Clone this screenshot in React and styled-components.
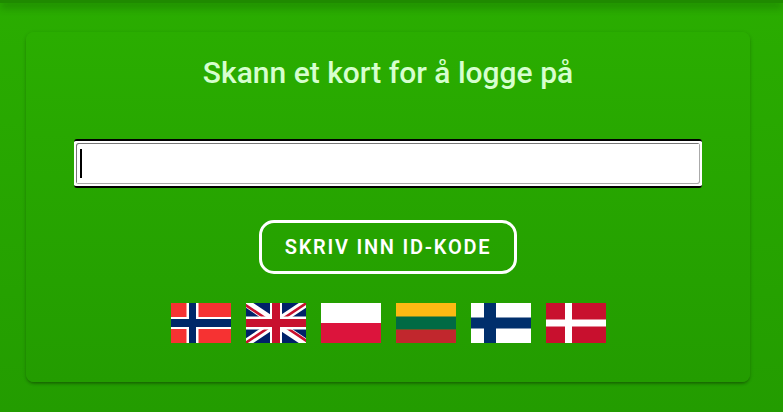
import React from "react";
import styled, { createGlobalStyle } from "styled-components";

const flags = [
	{ code: "no", label: "Norsk" },
	{ code: "gb", label: "English" },
	{ code: "pl", label: "Polski" },
	{ code: "lt", label: "Lietuvių" },
	{ code: "fi", label: "Suomi" },
	{ code: "dk", label: "Dansk" },
];

const GlobalStyle = createGlobalStyle`
	html, body {
		margin: 0;
		height: 100%;
		overflow: hidden;
	}
	body {
		font-family: Roboto, "Liberation Sans", sans-serif;
		background: linear-gradient(#2aad00, #239c00);
	}
`;

const Page = styled.main`
	box-sizing: border-box;
	width: 783px;
	height: 412px;
	padding: 32px 33px 30px 26px;
	position: relative;
`;

const TopShadow = styled.div`
	position: absolute;
	top: 0;
	left: 0;
	right: 0;
	height: 3px;
	background: #1f8a00;
	box-shadow: 0 3px 8px rgba(0, 50, 0, 0.65);
`;

const Card = styled.section`
	box-sizing: border-box;
	height: 350px;
	padding: 24px 48px 0;
	display: flex;
	flex-direction: column;
	align-items: center;
	border-radius: 8px;
	background: linear-gradient(#2aad00, #239c00);
	box-shadow: 0 3px 3px -2px rgba(0, 0, 0, 0.2), 0 2px 3px 0 rgba(0, 0, 0, 0.14),
		0 1px 4px 0 rgba(0, 0, 0, 0.12);
`;

const Title = styled.h1`
	margin: 0;
	font-size: 30px;
	line-height: 33px;
	font-weight: 500;
	color: #d6ffce;
`;

const InputFrame = styled.div`
	position: relative;
	box-sizing: border-box;
	width: 100%;
	height: 49px;
	margin-top: 50px;
	border-top: 2px solid #000;
	border-bottom: 2px solid #000;
	border-radius: 3px;
	background: #fff;
`;

const CodeInput = styled.input`
	display: block;
	box-sizing: border-box;
	width: 100%;
	height: 100%;
	padding: 0 4px;
	border: 2px solid #fff;
	border-radius: 4px;
	outline: none;
	background: #fff;
	box-shadow: inset 1px 1px 0 #777, inset -1px -1px 0 #aaa;
`;

const Caret = styled.span`
	position: absolute;
	left: 6px;
	top: 8px;
	width: 1.5px;
	height: 29px;
	background: #000;
`;

const EnterButton = styled.button`
	box-sizing: border-box;
	width: 258px;
	height: 54px;
	margin-top: 32px;
	border: 3px solid #fff;
	border-radius: 15px;
	background: transparent;
	color: #fff;
	font-family: inherit;
	font-size: 20px;
	font-weight: 600;
	letter-spacing: 1.75px;
	text-transform: uppercase;
`;

const FlagRow = styled.div`
	display: flex;
	gap: 15px;
	margin-top: 29px;
`;

const FlagButton = styled.button`
	display: block;
	width: 60px;
	height: 40px;
	padding: 0;
	border: 0;
	background: none;

	svg {
		display: block;
		width: 60px;
		height: 40px;
	}
`;

function Flag({ code }) {
	if (code === "no")
		return (
			<svg viewBox="0 0 60 40" preserveAspectRatio="none">
				<rect width="60" height="40" fill="#f63232" />
				<rect x="15.5" width="12" height="40" fill="#fff" />
				<rect y="14" width="60" height="12" fill="#fff" />
				<rect x="18" width="7" height="40" fill="#002868" />
				<rect y="16" width="60" height="8" fill="#002868" />
			</svg>
		);
	if (code === "gb")
		return (
			<svg viewBox="0 0 60 40" preserveAspectRatio="none">
				<rect width="60" height="40" fill="#012169" />
				<path d="M0 0L60 40M60 0L0 40" stroke="#fff" strokeWidth="8" />
				<path
					d="M-2 1L28 21M62 -1L32 19M62 39L32 19M-2 41L28 21"
					stroke="#c8102e"
					strokeWidth="2.6"
				/>
				<rect x="24" width="12" height="40" fill="#fff" />
				<rect y="13.5" width="60" height="13" fill="#fff" />
				<rect x="26" width="8" height="40" fill="#c8102e" />
				<rect y="16" width="60" height="8" fill="#c8102e" />
			</svg>
		);
	if (code === "pl")
		return (
			<svg viewBox="0 0 60 40" preserveAspectRatio="none">
				<rect width="60" height="20" fill="#fff" />
				<rect y="20" width="60" height="20" fill="#dc143c" />
			</svg>
		);
	if (code === "lt")
		return (
			<svg viewBox="0 0 60 40" preserveAspectRatio="none">
				<rect width="60" height="14" fill="#fdb913" />
				<rect y="13.5" width="60" height="13" fill="#006a44" />
				<rect y="26.5" width="60" height="13.5" fill="#c1272d" />
			</svg>
		);
	if (code === "fi")
		return (
			<svg viewBox="0 0 60 40" preserveAspectRatio="none">
				<rect width="60" height="40" fill="#fff" />
				<rect x="13" width="12" height="40" fill="#002f6c" />
				<rect y="14.5" width="60" height="11" fill="#002f6c" />
			</svg>
		);
	return (
		<svg viewBox="0 0 60 40" preserveAspectRatio="none">
			<rect width="60" height="40" fill="#c8102e" />
			<rect x="19" width="7" height="40" fill="#fff" />
			<rect y="16.5" width="60" height="7" fill="#fff" />
		</svg>
	);
}

export default function App() {
	return (
		<Page>
			<GlobalStyle />
			<TopShadow />
			<Card>
				<Title>Skann et kort for å logge på</Title>
				<InputFrame>
					<CodeInput type="text" aria-label="Kort" />
					<Caret />
				</InputFrame>
				<EnterButton>Skriv inn ID-kode</EnterButton>
				<FlagRow>
					{flags.map((flag) => (
						<FlagButton key={flag.code} aria-label={flag.label}>
							<Flag code={flag.code} />
						</FlagButton>
					))}
				</FlagRow>
			</Card>
		</Page>
	);
}
